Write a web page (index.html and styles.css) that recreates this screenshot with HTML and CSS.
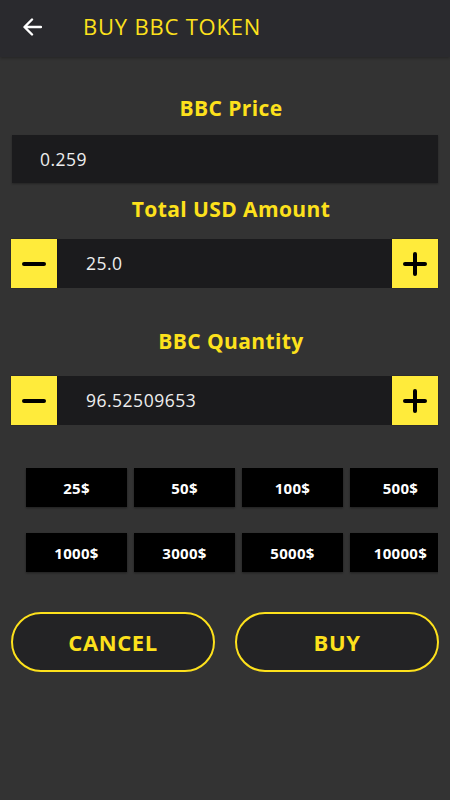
FILE: index.html
```html
<html>

<head>
  <title>Buy BBC Token</title>
  <link rel="stylesheet" href="styles.css">
</head>

<body>

  <div class="toolbar">
    <svg class="back" width="20" height="20" viewBox="0 0 20 20">
      <path d="M19 10H3M10 2.5L2.5 10L10 17.5" fill="none" stroke="#fff" stroke-width="2.4" stroke-linecap="round" stroke-linejoin="round" />
    </svg>
    <h1>BUY BBC TOKEN</h1>
  </div>

  <div class="content">
    <h2 class="label first">BBC Price</h2>
    <div class="field">0.259</div>

    <h2 class="label second">Total USD Amount</h2>
    <div class="stepper">
      <button class="step minus"><span></span></button>
      <div class="value">25.0</div>
      <button class="step plus"><span></span><span class="v"></span></button>
    </div>

    <h2 class="label gap">BBC Quantity</h2>
    <div class="stepper">
      <button class="step minus"><span></span></button>
      <div class="value">96.52509653</div>
      <button class="step plus"><span></span><span class="v"></span></button>
    </div>

    <div class="chips">
      <div class="chip-row">
        <div class="chip">25$</div>
        <div class="chip">50$</div>
        <div class="chip">100$</div>
        <div class="chip">500$</div>
      </div>
      <div class="chip-row">
        <div class="chip">1000$</div>
        <div class="chip">3000$</div>
        <div class="chip">5000$</div>
        <div class="chip">10000$</div>
      </div>
    </div>

    <div class="actions">
      <button class="pill">CANCEL</button>
      <button class="pill">BUY</button>
    </div>
  </div>

</body>

</html>
```

FILE: styles.css
```css
:root {
  --yellow: #fde11c;
  --button: #ffeb3b;
  --background: #333333;
  --toolbar: #2a2a2e;
  --field: #1b1b1d;
}

* {
  margin: 0;
  padding: 0;
  box-sizing: border-box;
  font-family: "Open Sans", "Liberation Sans", sans-serif;
}

body {
  background: var(--background);
  width: 450px;
  height: 800px;
  overflow: hidden;
}

.toolbar {
  height: 57px;
  background: var(--toolbar);
  display: flex;
  align-items: center;
  box-shadow: 0 1px 3px rgba(0, 0, 0, 0.3);
}

.back {
  margin-left: 22px;
  margin-top: -3px;
}

.toolbar h1 {
  margin-left: 41px;
  margin-top: -5px;
  font-size: 22px;
  font-weight: 400;
  color: var(--yellow);
  letter-spacing: 0.8px;
}

.content {
  padding: 0 12px;
}

.label {
  text-align: center;
  color: var(--yellow);
  font-size: 21px;
  font-weight: 700;
  letter-spacing: 0.4px;
  height: 28px;
  line-height: 28px;
  padding-left: 12px;
  margin-bottom: 10px;
}

.label.first {
  margin-top: 37px;
  margin-bottom: 13px;
}

.label.second {
  margin-bottom: 16px;
}

.label.gap {
  margin-top: 39px;
  margin-bottom: 21px;
}

.field {
  height: 48px;
  background: var(--field);
  color: #eeeeee;
  font-size: 17.5px;
  letter-spacing: 0.5px;
  line-height: 48px;
  padding-left: 28px;
  margin-bottom: 12px;
  box-shadow: 0 1px 2px rgba(0, 0, 0, 0.3);
}

.stepper {
  display: flex;
  height: 49px;
  margin-left: -1px;
  background: var(--field);
}

.step {
  width: 46px;
  height: 49px;
  border: none;
  background: var(--button);
  position: relative;
  box-shadow: 0 0 1px rgba(0, 0, 0, 0.6);
}

.step span {
  position: absolute;
  left: 11px;
  top: 23px;
  width: 24px;
  height: 4px;
  border-radius: 2px;
  background: #000;
}

.step span.v {
  left: 21px;
  top: 13px;
  width: 4px;
  height: 24px;
}

.value {
  flex: 1;
  color: #eeeeee;
  font-size: 17.5px;
  letter-spacing: 0.5px;
  line-height: 49px;
  padding-left: 29px;
}

.chips {
  margin-top: 43px;
  overflow: hidden;
  padding-left: 14px;
}

.chip-row {
  display: flex;
  gap: 7px;
  margin-bottom: 26px;
  width: 430px;
}

.chip {
  flex: 0 0 101px;
  height: 39px;
  background: #000;
  color: #fff;
  font-size: 15px;
  font-weight: 700;
  letter-spacing: 0.3px;
  display: flex;
  align-items: center;
  justify-content: center;
  box-shadow: 0 1px 2px rgba(0, 0, 0, 0.4);
}

.actions {
  display: flex;
  justify-content: space-between;
  margin-top: 14px;
  margin-left: -1px;
  margin-right: -1px;
}

.pill {
  width: 204px;
  height: 60px;
  border: 2.5px solid var(--yellow);
  border-radius: 30px;
  background: #232325;
  color: var(--yellow);
  font-size: 22px;
  font-weight: 700;
  letter-spacing: 0.6px;
}
```
